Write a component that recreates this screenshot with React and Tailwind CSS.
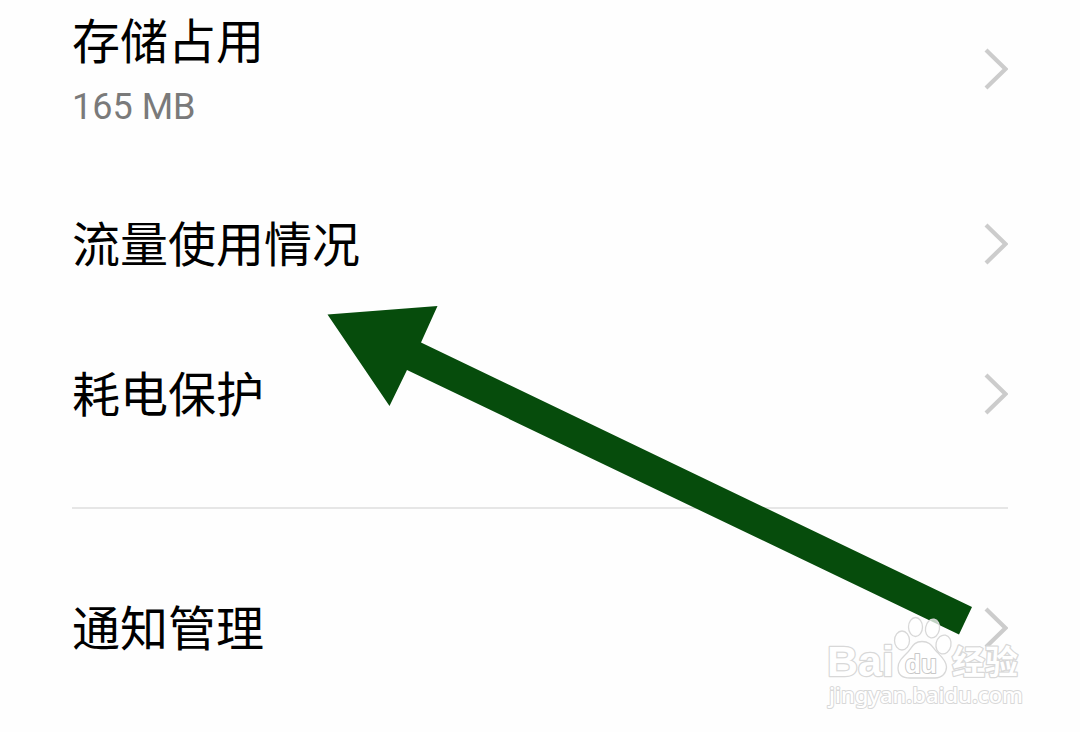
const storage = [
  { id: "storage", title: "存储占用", detail: "165 MB" },
  { id: "data", title: "流量使用情况" },
  { id: "battery", title: "耗电保护" },
];

const notifications = [{ id: "notifications", title: "通知管理" }];

function Chevron() {
  return (
    <svg
      className="h-11 w-7 shrink-0"
      viewBox="0 0 28 44"
      fill="none"
      stroke="#cccccc"
      strokeWidth="4.200"
      aria-hidden="true"
    >
      <path d="M6 3 25.500 22 6 41" />
    </svg>
  );
}

function SettingRow({ item }) {
  return (
    <li>
      <button
        type="button"
        className={`flex w-full items-center justify-between text-left ${
          item.detail ? "min-h-[169px] pb-8" : "min-h-[150px]"
        }`}
      >
        <span className="flex flex-col pt-1">
          <span className="text-[48px] leading-[72px] text-black">
            {item.title}
          </span>
          {item.detail && (
            <span className="text-[36px] leading-[56px] text-[#7a7a7a]">
              {item.detail}
            </span>
          )}
        </span>
        <Chevron />
      </button>
    </li>
  );
}

function SettingGroup({ items }) {
  return (
    <ul>
      {items.map((item) => (
        <SettingRow key={item.id} item={item} />
      ))}
    </ul>
  );
}

function Arrow() {
  return (
    <svg
      className="pointer-events-none absolute top-[306px] left-[327px] h-[330px] w-[646px]"
      viewBox="327 306 646 330"
      aria-hidden="true"
    >
      <path
        d="M327.500 314.500 437.500 306 421 342.500 972 607 959 634.500 407 370 389.500 406Z"
        fill="#064c0c"
      />
    </svg>
  );
}

function Watermark() {
  return (
    <svg
      className="pointer-events-none absolute top-[612px] left-[820px] h-[104px] w-[210px]"
      viewBox="820 612 210 104"
      fill="#ffffff"
      stroke="#d8d8d8"
      strokeWidth="2.500"
      strokeLinejoin="round"
      paintOrder="stroke"
      role="img"
      aria-label="Baidu 经验"
    >
      <text
        x="827"
        y="676"
        className="font-['Liberation_Sans',sans-serif] text-[43px] font-bold"
      >
        Bai
      </text>
      <g strokeWidth="1.300" fillOpacity="0.750" paintOrder="normal">
        <ellipse cx="902" cy="640.500" rx="7.500" ry="9.500" />
        <ellipse cx="915.500" cy="627" rx="7" ry="9.500" />
        <ellipse cx="932.500" cy="628.500" rx="7" ry="9.500" transform="rotate(10 932.500 628.500)" />
        <ellipse cx="943.500" cy="644.500" rx="7.500" ry="9.500" transform="rotate(12 943.500 644.500)" />
        <path d="M922 641.500C913 641.500 912 648 907 653C901 659 898 662 898 668C898 675 903 678 910 678H935C942 678 946.500 673 946.500 667C946.500 661 941 656 937 652C932 647 931 641.500 922 641.500Z" />
      </g>
      <text
        x="905"
        y="673"
        stroke="#c8c8c8"
        strokeWidth="2"
        className="font-['Liberation_Sans',sans-serif] text-[26px] font-bold"
      >
        du
      </text>
      <text
        x="952"
        y="674"
        className="font-['Noto_Sans_CJK_SC',sans-serif] text-[33px] font-bold"
      >
        经验
      </text>
      <text
        x="829"
        y="703"
        strokeWidth="2"
        className="font-['Noto_Sans',sans-serif] text-[22px] font-medium"
      >
        jingyan.baidu.com
      </text>
    </svg>
  );
}

export default function App() {
  return (
    <main className="relative min-h-screen overflow-hidden bg-[#fefefe] px-[72px] font-[Roboto,'Noto_Sans_CJK_SC',sans-serif]">
      <SettingGroup items={storage} />
      <hr className="mt-[38px] mb-11 border-t-2 border-[#e6e6e6]" />
      <SettingGroup items={notifications} />
      <Arrow />
      <Watermark />
    </main>
  );
}
